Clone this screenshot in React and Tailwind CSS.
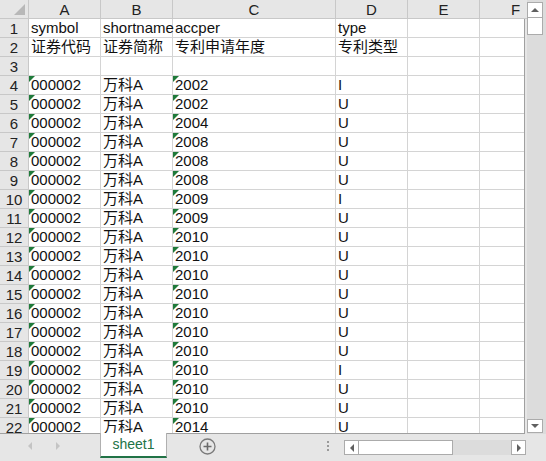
import React from "react";

const years = [
  "2002", "2002", "2004", "2008", "2008", "2008", "2009", "2009",
  "2010", "2010", "2010", "2010", "2010", "2010", "2010", "2010",
  "2010", "2010", "2014",
];
const types = [
  "I", "U", "U", "U", "U", "U", "I", "U",
  "U", "U", "U", "U", "U", "U", "U", "I",
  "U", "U", "U",
];

const cols = [
  { name: "A", w: "w-[72px]" },
  { name: "B", w: "w-[72px]" },
  { name: "C", w: "w-[163px]" },
  { name: "D", w: "w-[72px]" },
  { name: "E", w: "w-[72px]" },
  { name: "F", w: "w-[72px]" },
];

const Flag = () => (
  <span className="absolute left-0 top-0 w-0 h-0 border-t-[6px] border-r-[6px] border-t-[#1f7a3a] border-r-transparent" />
);

const Cell = ({ w, children, flag }) => (
  <div className={`relative ${w} shrink-0 h-full border-r border-b border-[#d4d4d4] pl-[2px] flex items-end pb-[1px] whitespace-nowrap`}>
    {flag && <Flag />}
    <span className="leading-[17px]">{children}</span>
  </div>
);

const Row = ({ n, cells }) => (
  <div className="flex h-[19px] shrink-0">
    <div className="w-[29px] shrink-0 h-full bg-[#e6e6e6] border-r border-b border-[#c8c8c8] flex items-center justify-center text-[#222] leading-[17px]">
      {n}
    </div>
    {cells}
  </div>
);

const App = () => {
  const rows = [];
  rows.push(
    <Row
      key={1}
      n={1}
      cells={[
        <Cell key="a" w="w-[72px]">symbol</Cell>,
        <Cell key="b" w="w-[72px]">shortname</Cell>,
        <Cell key="c" w="w-[163px]">accper</Cell>,
        <Cell key="d" w="w-[72px]">type</Cell>,
        <Cell key="e" w="w-[72px]" />,
        <Cell key="f" w="w-[72px]" />,
      ]}
    />
  );
  rows.push(
    <Row
      key={2}
      n={2}
      cells={[
        <Cell key="a" w="w-[72px]">证券代码</Cell>,
        <Cell key="b" w="w-[72px]">证券简称</Cell>,
        <Cell key="c" w="w-[163px]">专利申请年度</Cell>,
        <Cell key="d" w="w-[72px]">专利类型</Cell>,
        <Cell key="e" w="w-[72px]" />,
        <Cell key="f" w="w-[72px]" />,
      ]}
    />
  );
  rows.push(
    <Row
      key={3}
      n={3}
      cells={cols.map((c) => <Cell key={c.name} w={c.w} />)}
    />
  );
  years.forEach((y, i) => {
    rows.push(
      <Row
        key={i + 4}
        n={i + 4}
        cells={[
          <Cell key="a" w="w-[72px]" flag>000002</Cell>,
          <Cell key="b" w="w-[72px]">万科A</Cell>,
          <Cell key="c" w="w-[163px]" flag>{y}</Cell>,
          <Cell key="d" w="w-[72px]">{types[i]}</Cell>,
          <Cell key="e" w="w-[72px]" />,
          <Cell key="f" w="w-[72px]" />,
        ]}
      />
    );
  });

  return (
    <div
      className="w-[546px] h-[461px] bg-[#e6e6e6] flex flex-col overflow-hidden text-[15px] leading-[17px] text-[#111]"
      style={{ fontFamily: '"Liberation Sans", "Noto Sans CJK SC", sans-serif' }}
    >
      <div className="flex h-[434px] shrink-0">
        {/* sheet grid */}
        <div className="w-[527px] shrink-0 flex flex-col">
          <div className="flex h-[19px] shrink-0 bg-[#e6e6e6]">
            <div className="w-[29px] shrink-0 h-full border-r border-b border-[#c8c8c8] relative">
              <span className="absolute right-[3px] bottom-[3px] w-0 h-0 border-b-[11px] border-l-[11px] border-b-[#b8b8b8] border-l-transparent" />
            </div>
            {cols.map((c) => (
              <div
                key={c.name}
                className={`${c.w} shrink-0 h-full border-r border-b border-[#c8c8c8] flex items-center justify-center text-[#222]`}
              >
                {c.name}
              </div>
            ))}
          </div>
          <div className="flex-1 flex">
            <div className="w-[525px] h-[415px] bg-white border-r border-b border-[#a0a0a0] overflow-hidden flex flex-col">
              {rows.map((r, i) => (
                <React.Fragment key={i}>{r}</React.Fragment>
              ))}
            </div>
          </div>
        </div>
        {/* vertical scrollbar */}
        <div className="w-[19px] shrink-0 bg-[#dcdcdc] flex flex-col items-start pt-[2px] pb-[1px]">
          <div className="w-[16px] h-[16px] bg-white border border-[#ababab] flex items-center justify-center">
            <span className="w-0 h-0 border-l-[4px] border-r-[4px] border-b-[4px] border-l-transparent border-r-transparent border-b-[#606060]" />
          </div>
          <div className="w-[16px] h-[17px] bg-white border border-[#ababab] border-t-0" />
          <div className="flex-1" />
          <div className="w-[16px] h-[14px] bg-white border border-[#ababab] flex items-center justify-center">
            <span className="w-0 h-0 border-l-[4px] border-r-[4px] border-t-[4px] border-l-transparent border-r-transparent border-t-[#606060]" />
          </div>
        </div>
      </div>
      {/* sheet tabs bar */}
      <div className="flex-1 flex items-start">
        <div className="w-[100px] shrink-0 h-[24px] flex items-center">
          <span className="ml-[28px] w-0 h-0 border-t-[4px] border-b-[4px] border-r-[4px] border-t-transparent border-b-transparent border-r-[#c4c4c4]" />
          <span className="ml-[24px] w-0 h-0 border-t-[4px] border-b-[4px] border-l-[4px] border-t-transparent border-b-transparent border-l-[#c4c4c4]" />
        </div>
        <div className="w-[67px] h-[25px] shrink-0 bg-white border-l border-r border-[#b0b0b0] border-b-[2px] border-b-[#217346] flex items-center justify-center text-[#217346] text-[14px] -mt-[1px]">
          sheet1
        </div>
        <div className="w-[81px] shrink-0 h-[24px] flex items-center justify-center">
          <svg width="17" height="17" viewBox="0 0 17 17">
            <circle cx="8.5" cy="8.5" r="7.5" fill="none" stroke="#7a7a7a" strokeWidth="1.3" />
            <path d="M8.5 4.5v8M4.5 8.5h8" stroke="#6a6a6a" strokeWidth="1.6" />
          </svg>
        </div>
        <div className="w-[96px] shrink-0 h-[24px] flex flex-col items-end justify-center gap-[2px] pr-[15px]">
          <span className="w-[2px] h-[2px] bg-[#9a9a9a]" />
          <span className="w-[2px] h-[2px] bg-[#9a9a9a]" />
          <span className="w-[2px] h-[2px] bg-[#9a9a9a]" />
        </div>
        <div className="mt-[6px] flex h-[15px] w-[182px] shrink-0 bg-[#dcdcdc]">
          <div className="w-[15px] h-full bg-white border border-[#ababab] flex items-center justify-center">
            <span className="w-0 h-0 border-t-[4px] border-b-[4px] border-r-[4px] border-t-transparent border-b-transparent border-r-[#606060]" />
          </div>
          <div className="w-[94px] h-full bg-white border border-l-0 border-[#ababab]" />
          <div className="flex-1" />
          <div className="w-[15px] h-full bg-white border border-[#ababab] flex items-center justify-center">
            <span className="w-0 h-0 border-t-[4px] border-b-[4px] border-l-[4px] border-t-transparent border-b-transparent border-l-[#606060]" />
          </div>
        </div>
      </div>
    </div>
  );
};

export default App;
